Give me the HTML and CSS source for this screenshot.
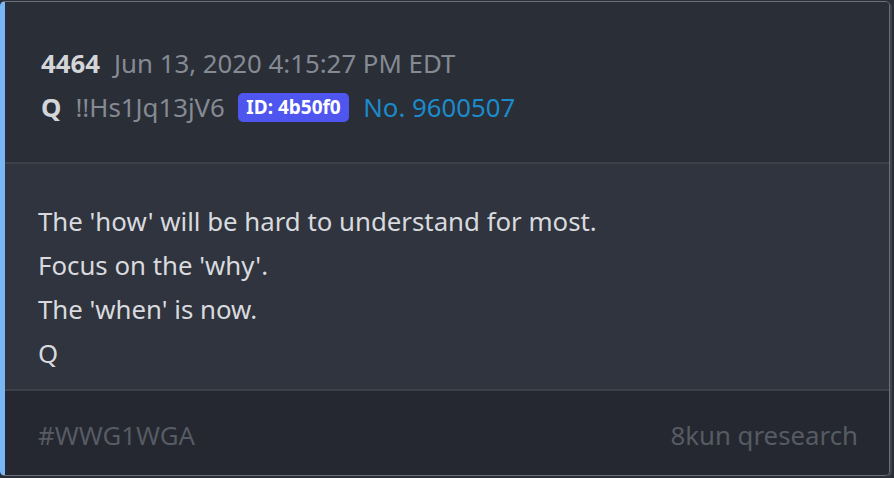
FILE: index.html
```html
<!DOCTYPE html>
<html lang="en">
<head>
    <meta charset="UTF-8">
    <meta name="viewport" content="width=device-width, initial-scale=1.0">
    <title>Post 4464</title>
    <link rel="stylesheet" href="styles.css">
</head>
<body>
    <div class="post">
        <div class="post-header">
            <div class="meta-line">
                <strong class="post-num">4464</strong>
                <span class="post-date">Jun 13, 2020 4:15:27 PM EDT</span>
            </div>
            <div class="meta-line">
                <strong class="author">Q</strong>
                <span class="trip">!!Hs1Jq13jV6</span>
                <span class="id-badge">ID: 4b50f0</span>
                <a class="post-link" href="#">No. 9600507</a>
            </div>
        </div>
        <div class="post-body">
            <p>The 'how' will be hard to understand for most.</p>
            <p>Focus on the 'why'.</p>
            <p>The 'when' is now.</p>
            <p>Q</p>
        </div>
        <div class="post-footer">
            <span>#WWG1WGA</span>
            <span>8kun qresearch</span>
        </div>
    </div>
</body>
</html>
```

FILE: styles.css
```css
body {
    margin: 0;
    background-color: #2a2e37;
    font-family: "Noto Sans", "Open Sans", sans-serif;
}
.post {
    width: 884px;
    margin-top: 1px;
    border: 1px solid #6c707a;
    border-left: 5px solid #78b6f6;
    border-radius: 5px;
    overflow: hidden;
    box-shadow: 2px 1px 0 #3e424a;
}
.post-header {
    padding: 39px 36px 33px;
    background: #2a2e37;
    border-bottom: 2px solid #3b4049;
}
.meta-line {
    display: flex;
    align-items: center;
    line-height: 44px;
    font-size: 25.8px;
}
.post-num,
.author {
    color: #d4d5d8;
    margin-right: 14px;
}
.post-date,
.trip {
    color: #858a93;
}
.trip {
    margin-right: 13px;
}
.id-badge {
    background: #4f56ef;
    color: white;
    font-weight: bold;
    font-size: 19px;
    line-height: 29px;
    padding: 0 8.5px;
    border-radius: 5px;
    margin-right: 14px;
}
.post-link {
    color: #1b8bcb;
    text-decoration: none;
}
.post-body {
    padding: 35px 33px 14px;
    background: #2f343e;
    border-bottom: 2px solid #3b4049;
}
.post-body p {
    margin: 0;
    color: #d9dade;
    font-size: 25.8px;
    line-height: 44px;
}
.post-footer {
    display: flex;
    justify-content: space-between;
    padding: 27px 31px 23px 33px;
    background: #252830;
    color: #565b64;
    font-size: 25.8px;
    line-height: 34px;
}
```
